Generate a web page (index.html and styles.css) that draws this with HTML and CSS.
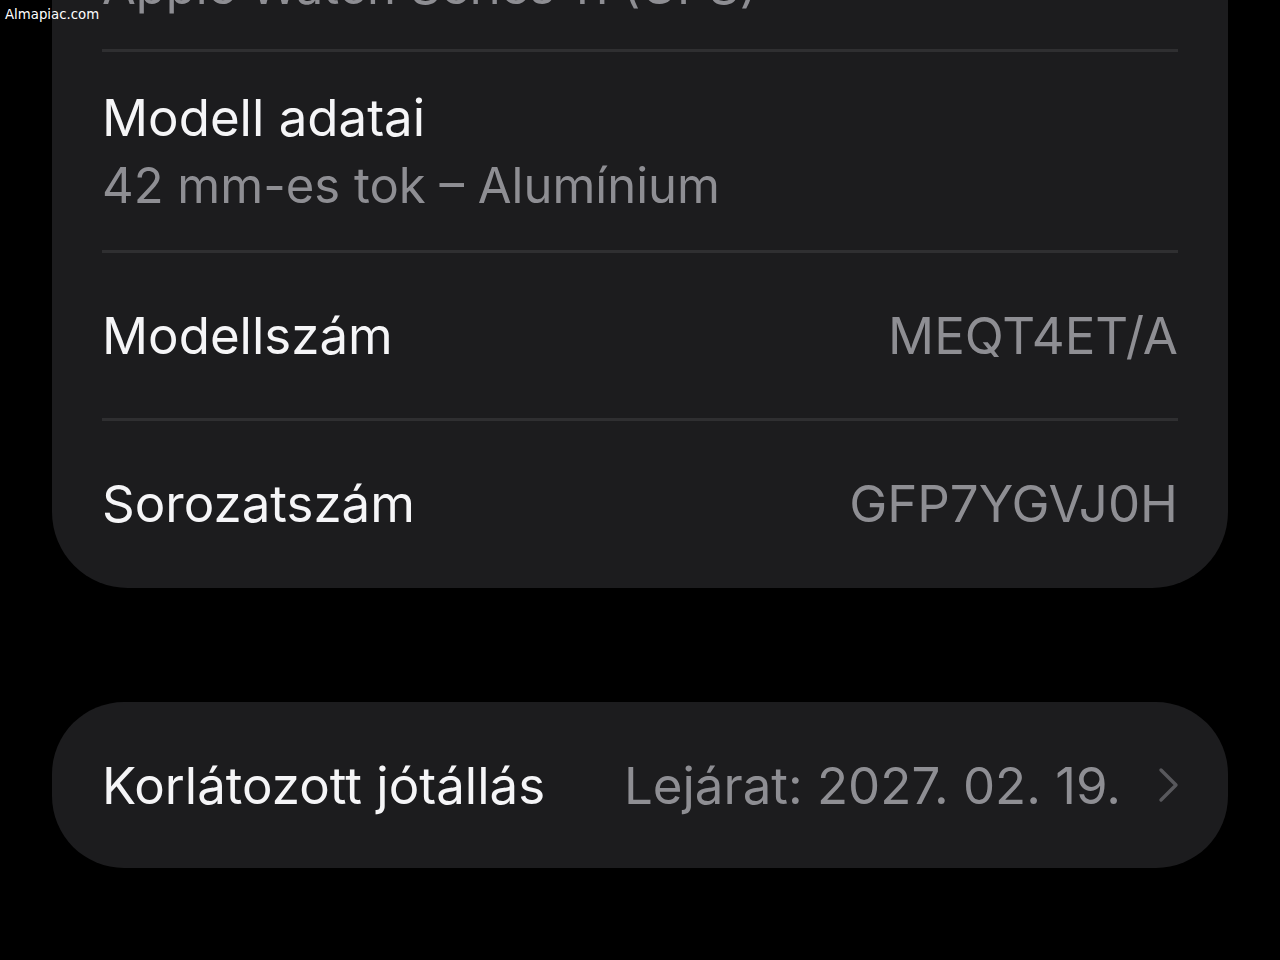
FILE: index.html
```html
<!DOCTYPE html>
<html lang="hu">
<head>
    <meta charset="UTF-8">
    <meta name="viewport" content="width=device-width, initial-scale=1.0">
    <title>Névjegy</title>
    <link rel="stylesheet" href="styles.css">
</head>
<body>

    <div class="watermark">Almapiac.com</div>

    <div class="card card-info">
        <div class="row row-top">
            <span class="value">Apple Watch Series 11 (GPS)</span>
        </div>
        <div class="row row-stacked">
            <span class="label">Modell adatai</span>
            <span class="value">42 mm-es tok – Alumínium</span>
        </div>
        <div class="row">
            <span class="label">Modellszám</span>
            <span class="value">MEQT4ET/A</span>
        </div>
        <div class="row">
            <span class="label">Sorozatszám</span>
            <span class="value">GFP7YGVJ0H</span>
        </div>
    </div>

    <div class="card card-warranty">
        <div class="row">
            <span class="label">Korlátozott jótállás</span>
            <span class="value">Lejárat: 2027. 02. 19.
                <svg class="chevron" width="24" height="36" viewBox="0 0 24 36">
                    <path d="M4 3 L19 18 L4 33" fill="none" stroke="currentColor" stroke-width="3.4" stroke-linecap="round" stroke-linejoin="round"/>
                </svg>
            </span>
        </div>
    </div>

</body>
</html>
```

FILE: styles.css
```css
:root {
    --card-bg: #1c1c1e;
    --divider: #2f2f31;
    --text: #f5f5f7;
    --text-dim: #8e8e93;
    --chevron: #58585c;
}

body {
    margin: 0;
    background: #000;
    font-family: 'Inter', 'Noto Sans', sans-serif;
    color: var(--text);
    height: 960px;
    overflow: hidden;
}

/* watermark in the corner */
.watermark {
    position: absolute;
    top: 7px;
    left: 5px;
    font-family: 'DejaVu Sans', sans-serif;
    font-size: 13.3px;
    color: #fff;
    z-index: 2;
}

.card {
    background: var(--card-bg);
    margin-left: 52px;
    width: 1176px;
    padding: 0 50px;
    box-sizing: border-box;
}

.card-info {
    margin-top: -60px;
    padding-bottom: 2px;
    border-radius: 0 0 76px 76px;
}

.card-warranty {
    margin-top: 114px;
    height: 166px;
    border-radius: 72px;
    display: flex;
    align-items: center;
}

.row {
    display: flex;
    justify-content: space-between;
    align-items: center;
    height: 165px;
    font-size: 51px;
    border-top: 3px solid var(--divider);
}

.row-top {
    height: 109px;
    border-top: none;
    align-items: flex-end;
}

.row-top .value {
    font-size: 49px;
    line-height: 1;
    margin-bottom: 38px;
}

.row-stacked {
    flex-direction: column;
    align-items: flex-start;
    justify-content: center;
    height: 198px;
    gap: 8px;
}

.row-stacked .value {
    font-size: 49px;
}

.card-warranty .row {
    border-top: none;
    width: 100%;
}

.label {
    color: var(--text);
}

.value {
    color: var(--text-dim);
    display: flex;
    align-items: center;
}

.chevron {
    color: var(--chevron);
    margin-left: 36px;
    margin-right: -3px;
}
```
